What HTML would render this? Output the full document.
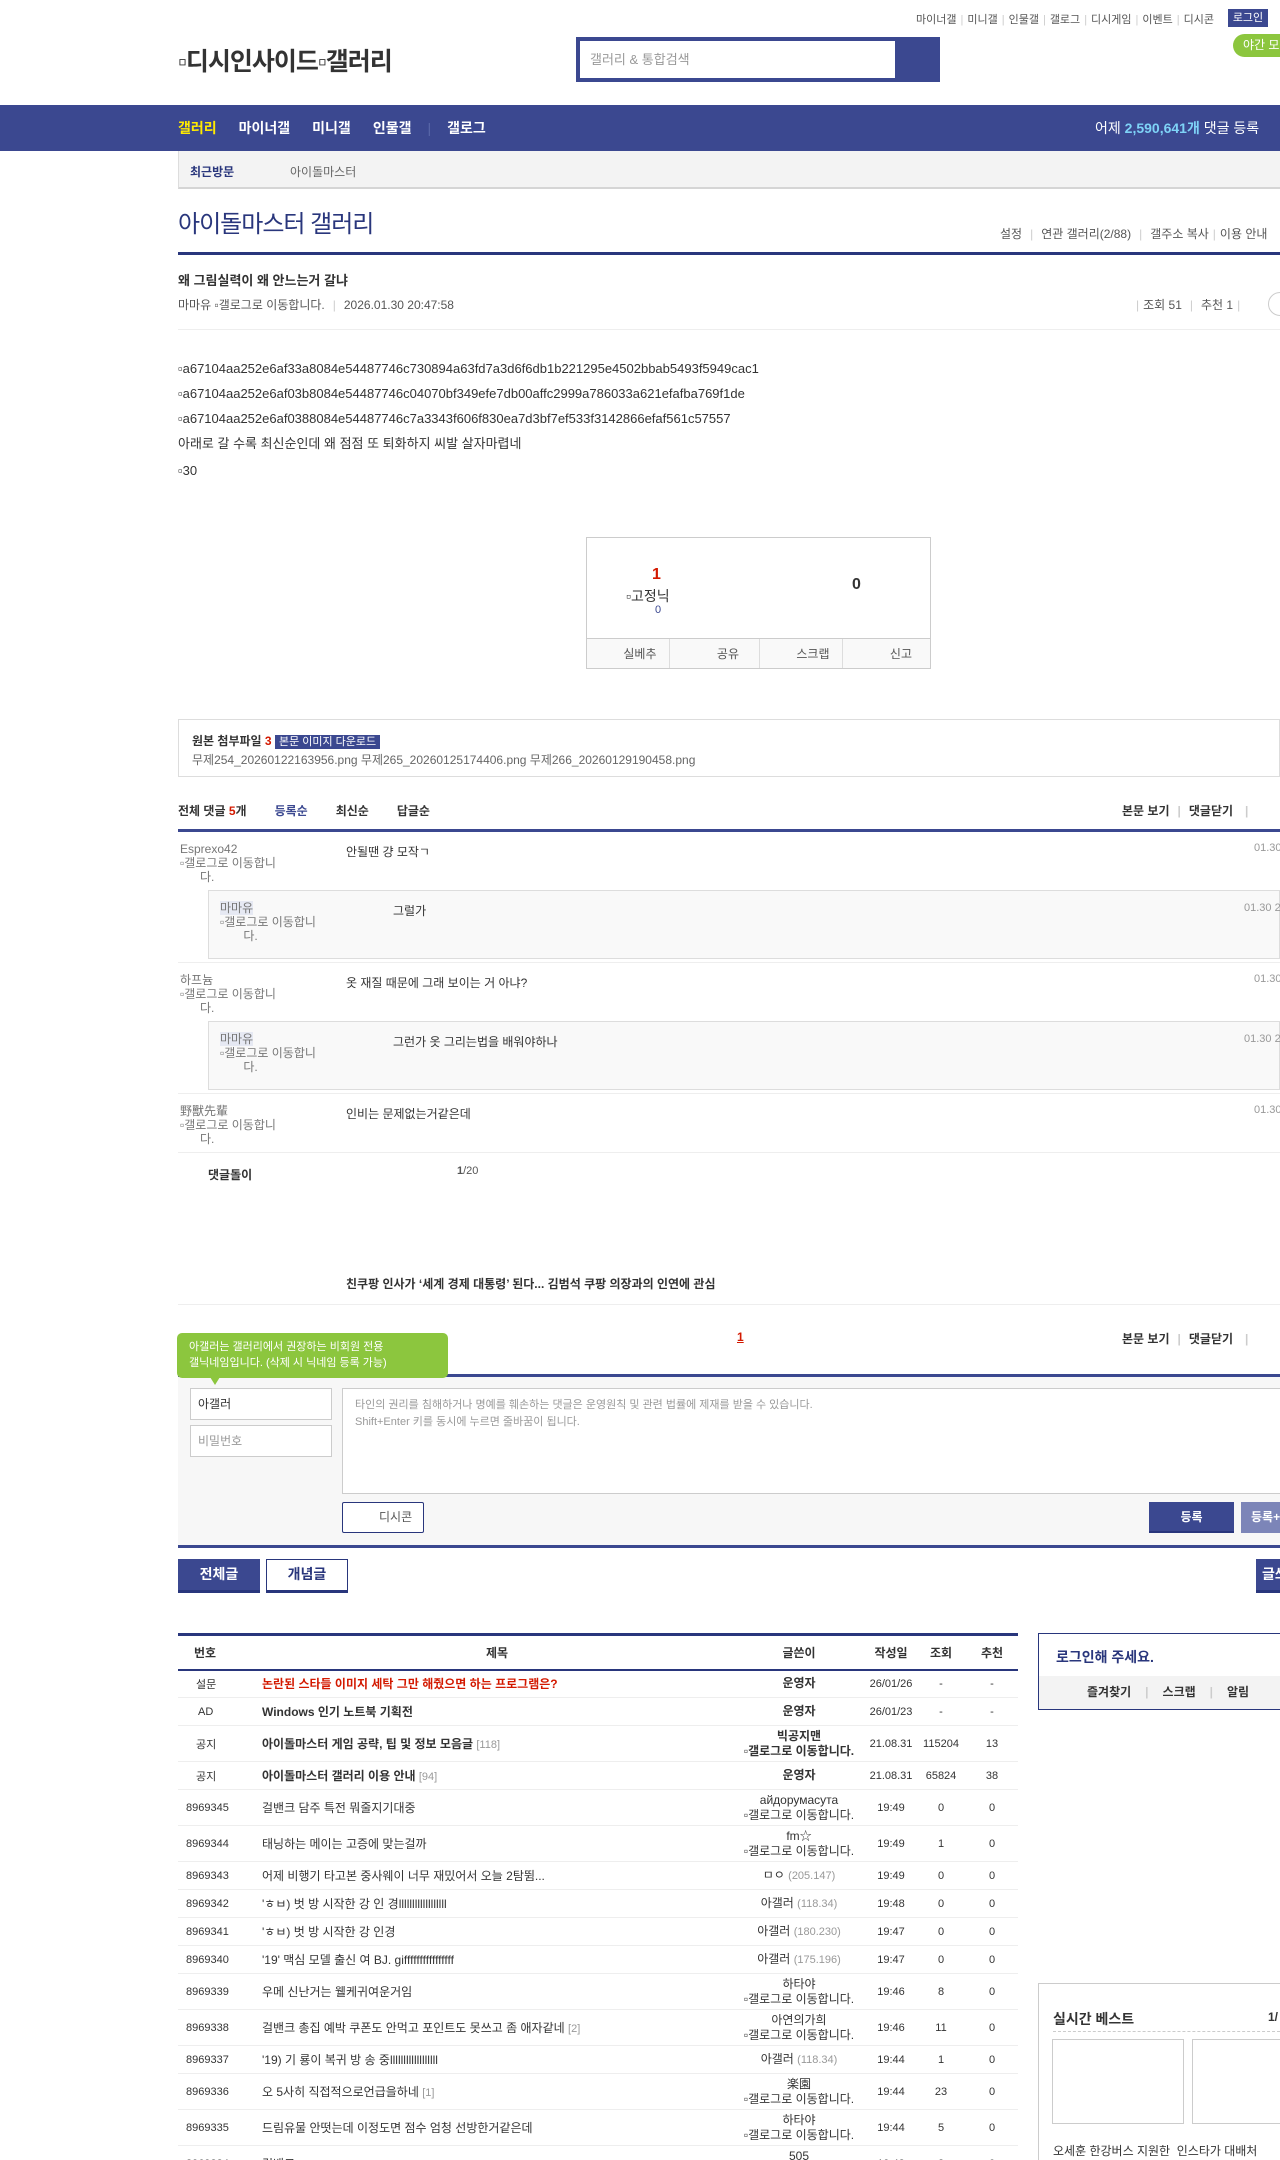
<!DOCTYPE html>
<html><head><meta charset="utf-8">
<style>
*{margin:0;padding:0;box-sizing:border-box}
html,body{width:1280px;height:2160px;overflow:hidden;background:#fff}
body{position:relative;font-family:"Liberation Sans","Noto Sans CJK KR",sans-serif;font-size:12px;color:#333}
.a{position:absolute;white-space:nowrap}
.sep{color:#ccc;margin:0 4px}
table{border-collapse:collapse}
.tb{position:absolute;left:178px;top:1633px;width:840px;border-top:3px solid #29367c;font-size:12px;table-layout:fixed}
.tb th{height:35px;font-weight:bold;font-size:12px;color:#333;border-bottom:2px solid #29367c}
.tb td{border-bottom:1px solid #eee;text-align:center;font-size:11px;color:#333;white-space:nowrap;overflow:hidden}
.tb td.t{text-align:left;font-size:12px;padding-left:0}
.tb td.w{font-size:12px;line-height:15px}
.tb .r28 td{height:28px}.tb .r36 td{height:36px}
.gr{color:#999;font-size:11px}
</style></head><body>

<div class="a" style="left:916px;top:11px;font-size:11px;color:#555">마이너갤<span class="sep">|</span>미니갤<span class="sep">|</span>인물갤<span class="sep">|</span>갤로그<span class="sep">|</span>디시게임<span class="sep">|</span>이벤트<span class="sep">|</span>디시콘</div>
<div class="a" style="left:1228px;top:9px;width:40px;height:18px;background:#3b4890;color:#fff;font-size:11px;text-align:center;line-height:18px">로그인</div>
<div class="a" style="left:1233px;top:34px;width:60px;height:23px;background:#8cc63e;color:#fff;border-radius:12px 0 0 12px;font-size:12px;line-height:23px;padding-left:10px">야간 모드</div>

<div class="a" style="left:178px;top:42px;font-size:25px;font-weight:bold;color:#333;letter-spacing:-1px">▫디시인사이드▫갤러리</div>

<div class="a" style="left:576px;top:37px;width:364px;height:45px;background:#3b4890"></div>
<div class="a" style="left:580px;top:41px;width:315px;height:37px;background:#fff;font-size:13px;color:#999;line-height:37px;padding-left:10px">갤러리 &amp; 통합검색</div>

<div class="a" style="left:0;top:105px;width:1280px;height:46px;background:#3b4890"></div>
<div class="a" style="left:178px;top:119px;font-size:14px;font-weight:bold;color:#fff;line-height:18px"><span style="color:#ffea00">갤러리</span><span style="margin-left:22px">마이너갤</span><span style="margin-left:22px">미니갤</span><span style="margin-left:22px">인물갤</span><span style="margin:0 16px;color:#5a67a8;font-weight:normal">|</span>갤로그</div>
<div class="a" style="left:1095px;top:119px;font-size:14px;color:#fff;line-height:18px">어제 <b style="color:#7ed3f7">2,590,641개</b> 댓글 등록</div>

<div class="a" style="left:178px;top:151px;width:1102px;height:38px;background:#f3f3f3;border-bottom:2px solid #d5d5d5;border-left:1px solid #ddd"></div>
<div class="a" style="left:190px;top:163px;font-size:12px;font-weight:bold;color:#29367c">최근방문</div>
<div class="a" style="left:290px;top:163px;font-size:12px;color:#666">아이돌마스터</div>

<div class="a" style="left:178px;top:204px;font-size:24px;color:#29367c;letter-spacing:-1px">아이돌마스터 갤러리</div>
<div class="a" style="left:1000px;top:225px;font-size:12px;color:#555">설정<span class="sep" style="margin:0 8px">|</span>연관 갤러리(2/88)<span class="sep" style="margin:0 8px">|</span>갤주소 복사<span class="sep">|</span>이용 안내</div>
<div class="a" style="left:178px;top:252px;width:1102px;height:3px;background:#29367c"></div>

<div class="a" style="left:178px;top:270px;font-size:13px;font-weight:bold;color:#333">왜 그림실력이 왜 안느는거 갈냐</div>
<div class="a" style="left:178px;top:296px;font-size:12px;color:#555">마마유 ▫갤로그로 이동합니다.<span class="sep" style="margin:0 8px">|</span>2026.01.30 20:47:58</div>
<div class="a" style="left:1132px;top:296px;font-size:12px;color:#555"><span class="sep">|</span>조회 51<span class="sep" style="margin:0 8px">|</span>추천 1<span class="sep">|</span></div>
<div class="a" style="left:1268px;top:292px;width:24px;height:24px;border:1px solid #ccc;border-radius:12px"></div>
<div class="a" style="left:178px;top:329px;width:1102px;height:1px;background:#eee"></div>

<div class="a" style="left:178px;top:356px;font-size:13px;color:#333;line-height:25px">▫a67104aa252e6af33a8084e54487746c730894a63fd7a3d6f6db1b221295e4502bbab5493f5949cac1<br>▫a67104aa252e6af03b8084e54487746c04070bf349efe7db00affc2999a786033a621efafba769f1de<br>▫a67104aa252e6af0388084e54487746c7a3343f606f830ea7d3bf7ef533f3142866efaf561c57557<br>아래로 갈 수록 최신순인데 왜 점점 또 퇴화하지 씨발 살자마렵네</div>
<div class="a" style="left:178px;top:463px;font-size:13px;color:#333">▫30</div>

<div class="a" style="left:586px;top:537px;width:345px;height:132px;border:1px solid #ccc"></div>
<div class="a" style="left:652px;top:566px;font-size:16px;color:#d31900;font-weight:bold">1</div>
<div class="a" style="left:626px;top:586px;font-size:14px;color:#333">▫고정닉</div>
<div class="a" style="left:655px;top:604px;font-size:11px;color:#3b4890">0</div>
<div class="a" style="left:852px;top:576px;font-size:16px;color:#333;font-weight:bold">0</div>
<div class="a" style="left:587px;top:638px;width:343px;height:30px;background:#f9f9f9;border-top:1px solid #ccc;display:flex;font-size:12px;color:#555">
<div style="flex:1;text-align:right;padding-right:12px;line-height:30px;border-right:1px solid #ddd">실베추</div>
<div style="flex:1;text-align:right;padding-right:20px;line-height:30px;border-right:1px solid #ddd">공유</div>
<div style="flex:1;text-align:right;padding-right:12px;line-height:30px;border-right:1px solid #ddd">스크랩</div>
<div style="flex:1;text-align:right;padding-right:18px;line-height:30px">신고</div></div>

<div class="a" style="left:178px;top:719px;width:1102px;height:58px;border:1px solid #ddd"></div>
<div class="a" style="left:192px;top:732px;font-size:12px;font-weight:bold;color:#333">원본 첨부파일 <span style="color:#d31900">3</span> <span style="background:#3b4890;color:#fff;font-weight:normal;font-size:11px;padding:1px 4px">본문 이미지 다운로드</span></div>
<div class="a" style="left:192px;top:751px;font-size:12px;color:#666">무제254_20260122163956.png 무제265_20260125174406.png 무제266_20260129190458.png</div>

<div class="a" style="left:178px;top:802px;font-size:12px;font-weight:bold;color:#333">전체 댓글 <span style="color:#d31900">5</span>개<span style="color:#3b4890;margin-left:28px">등록순</span><span style="margin-left:28px">최신순</span><span style="margin-left:28px">답글순</span></div>
<div class="a" style="left:1122px;top:802px;font-size:12px;font-weight:bold;color:#333">본문 보기<span class="sep" style="margin:0 8px">|</span>댓글닫기<span class="sep" style="margin-left:12px">|</span></div>
<div class="a" style="left:178px;top:829px;width:1102px;height:3px;background:#3b4890"></div>

<div class="a" style="left:180px;top:842px;font-size:12px;color:#777;line-height:14px">Esprexo42<br>▫갤로그로 이동합니<br>&nbsp;&nbsp;&nbsp;&nbsp;&nbsp;&nbsp;다.</div>
<div class="a" style="left:346px;top:843px;font-size:12px;color:#333">안될땐 걍 모작ㄱ</div>
<div class="a" style="left:1254px;top:842px;font-size:11px;color:#999">01.30 20:50:12</div>
<div class="a" style="left:208px;top:890px;width:1072px;height:69px;background:#f9f9f9;border:1px solid #ddd"></div>
<div class="a" style="left:220px;top:901px;font-size:12px;color:#777;line-height:14px"><span style="background:#e6e9f3">마마유</span><br>▫갤로그로 이동합니<br>&nbsp;&nbsp;&nbsp;&nbsp;&nbsp;&nbsp;&nbsp;다.</div>
<div class="a" style="left:393px;top:902px;font-size:12px;color:#333">그럴가</div>
<div class="a" style="left:1244px;top:902px;font-size:11px;color:#999">01.30 20:51:33</div>
<div class="a" style="left:178px;top:962px;width:1102px;height:1px;background:#eee"></div>

<div class="a" style="left:180px;top:973px;font-size:12px;color:#777;line-height:14px">하프늄<br>▫갤로그로 이동합니<br>&nbsp;&nbsp;&nbsp;&nbsp;&nbsp;&nbsp;다.</div>
<div class="a" style="left:346px;top:974px;font-size:12px;color:#333">옷 재질 때문에 그래 보이는 거 아냐?</div>
<div class="a" style="left:1254px;top:973px;font-size:11px;color:#999">01.30 20:52:10</div>
<div class="a" style="left:208px;top:1021px;width:1072px;height:69px;background:#f9f9f9;border:1px solid #ddd"></div>
<div class="a" style="left:220px;top:1032px;font-size:12px;color:#777;line-height:14px"><span style="background:#e6e9f3">마마유</span><br>▫갤로그로 이동합니<br>&nbsp;&nbsp;&nbsp;&nbsp;&nbsp;&nbsp;&nbsp;다.</div>
<div class="a" style="left:393px;top:1033px;font-size:12px;color:#333">그런가 옷 그리는법을 배워야하나</div>
<div class="a" style="left:1244px;top:1033px;font-size:11px;color:#999">01.30 20:53:02</div>
<div class="a" style="left:178px;top:1093px;width:1102px;height:1px;background:#eee"></div>

<div class="a" style="left:180px;top:1104px;font-size:12px;color:#777;line-height:14px">野獸先輩<br>▫갤로그로 이동합니<br>&nbsp;&nbsp;&nbsp;&nbsp;&nbsp;&nbsp;다.</div>
<div class="a" style="left:346px;top:1105px;font-size:12px;color:#333">인비는 문제없는거같은데</div>
<div class="a" style="left:1254px;top:1104px;font-size:11px;color:#999">01.30 20:55:40</div>
<div class="a" style="left:178px;top:1152px;width:1102px;height:1px;background:#eee"></div>
<div class="a" style="left:208px;top:1166px;font-size:12px;font-weight:bold;color:#333">댓글돌이</div>
<div class="a" style="left:457px;top:1165px;font-size:11px;color:#555"><b>1</b>/20</div>

<div class="a" style="left:346px;top:1275px;font-size:12px;font-weight:bold;color:#333">친쿠팡 인사가 ‘세계 경제 대통령’ 된다... 김범석 쿠팡 의장과의 인연에 관심</div>
<div class="a" style="left:178px;top:1304px;width:1102px;height:1px;background:#eee"></div>

<div class="a" style="left:737px;top:1330px;font-size:12px;font-weight:bold;color:#d31900;text-decoration:underline">1</div>
<div class="a" style="left:1122px;top:1330px;font-size:12px;font-weight:bold;color:#333">본문 보기<span class="sep" style="margin:0 8px">|</span>댓글닫기<span class="sep" style="margin-left:12px">|</span></div>
<div class="a" style="left:178px;top:1374px;width:1102px;height:3px;background:#3b4890"></div>
<div class="a" style="left:178px;top:1377px;width:1102px;height:168px;background:#f7f7f7"></div>
<div class="a" style="left:178px;top:1545px;width:1102px;height:3px;background:#3b4890"></div>
<div class="a" style="left:177px;top:1333px;width:271px;height:45px;background:#8cc63e;border-radius:5px;color:#fff;font-size:11px;line-height:16px;padding:6px 12px">아갤러는 갤러리에서 권장하는 비회원 전용<br>갤닉네임입니다. (삭제 시 닉네임 등록 가능)</div>
<div class="a" style="left:210px;top:1377px;width:0;height:0;border-left:5px solid transparent;border-right:5px solid transparent;border-top:8px solid #8cc63e"></div>
<div class="a" style="left:190px;top:1388px;width:142px;height:32px;background:#fff;border:1px solid #ccc;font-size:12px;color:#333;line-height:30px;padding-left:7px">아갤러</div>
<div class="a" style="left:190px;top:1425px;width:142px;height:32px;background:#fff;border:1px solid #ccc;font-size:12px;color:#999;line-height:30px;padding-left:7px">비밀번호</div>
<div class="a" style="left:342px;top:1388px;width:940px;height:106px;background:#fff;border:1px solid #ccc;font-size:11px;color:#999;line-height:17px;padding:8px 12px">타인의 권리를 침해하거나 명예를 훼손하는 댓글은 운영원칙 및 관련 법률에 제재를 받을 수 있습니다.<br>Shift+Enter 키를 동시에 누르면 줄바꿈이 됩니다.</div>
<div class="a" style="left:342px;top:1502px;width:82px;height:31px;background:#fff;border:1px solid #29367c;border-radius:2px;font-size:12px;color:#555;line-height:29px;padding-left:36px">디시콘</div>
<div class="a" style="left:1149px;top:1502px;width:85px;height:31px;background:#3b4890;color:#fff;font-size:12px;font-weight:bold;text-align:center;line-height:31px;border-bottom:2px solid #29367c">등록</div>
<div class="a" style="left:1241px;top:1502px;width:50px;height:31px;background:#7c85b8;color:#fff;font-size:12px;font-weight:bold;line-height:31px;padding-left:10px">등록+추천</div>

<div class="a" style="left:178px;top:1559px;width:82px;height:34px;background:#3b4890;border-bottom:3px solid #29367c;color:#fff;font-size:14px;font-weight:bold;text-align:center;line-height:31px">전체글</div>
<div class="a" style="left:266px;top:1559px;width:82px;height:34px;background:#fff;border:1px solid #29367c;border-bottom:3px solid #29367c;color:#29367c;font-size:14px;font-weight:bold;text-align:center;line-height:29px">개념글</div>
<div class="a" style="left:1256px;top:1559px;width:60px;height:34px;background:#3b4890;border-bottom:3px solid #29367c;color:#fff;font-size:14px;font-weight:bold;line-height:31px;padding-left:6px">글쓰기</div>

<table class="tb">
<colgroup><col style="width:84px"><col style="width:470px"><col style="width:134px"><col style="width:50px"><col style="width:50px"><col style="width:52px"></colgroup>
<tr><th style="text-align:left;padding-left:16px">번호</th><th>제목</th><th>글쓴이</th><th>작성일</th><th>조회</th><th>추천</th></tr>
<tr class="r28"><td class="gr" style="text-align:left;padding-left:18px">설문</td><td class="t" style="color:#d31900;font-weight:bold">논란된 스타들 이미지 세탁 그만 해줬으면 하는 프로그램은?</td><td class="w"><b>운영자</b></td><td>26/01/26</td><td>-</td><td>-</td></tr>
<tr class="r28"><td style="text-align:left;padding-left:20px">AD</td><td class="t" style="font-weight:bold">Windows 인기 노트북 기획전</td><td class="w"><b>운영자</b></td><td>26/01/23</td><td>-</td><td>-</td></tr>
<tr class="r36"><td class="gr" style="text-align:left;padding-left:18px">공지</td><td class="t" style="font-weight:bold">아이돌마스터 게임 공략, 팁 및 정보 모음글 <span class="gr" style="font-weight:normal">[118]</span></td><td class="w"><b>빅공지맨<br>▫갤로그로 이동합니다.</b></td><td>21.08.31</td><td>115204</td><td>13</td></tr>
<tr class="r28"><td class="gr" style="text-align:left;padding-left:18px">공지</td><td class="t" style="font-weight:bold">아이돌마스터 갤러리 이용 안내 <span class="gr" style="font-weight:normal">[94]</span></td><td class="w"><b>운영자</b></td><td>21.08.31</td><td>65824</td><td>38</td></tr>
<tr class="r36"><td style="text-align:left;padding-left:8px">8969345</td><td class="t">걸밴크 담주 특전 뭐줄지기대중</td><td class="w">айдорумасута<br>▫갤로그로 이동합니다.</td><td>19:49</td><td>0</td><td>0</td></tr>
<tr class="r36"><td style="text-align:left;padding-left:8px">8969344</td><td class="t">태닝하는 메이는 고증에 맞는걸까</td><td class="w">fm☆<br>▫갤로그로 이동합니다.</td><td>19:49</td><td>1</td><td>0</td></tr>
<tr class="r28"><td style="text-align:left;padding-left:8px">8969343</td><td class="t">어제 비행기 타고본 중사웨이 너무 재밌어서 오늘 2탐뜀...</td><td class="w">ㅁㅇ <span class="gr">(205.147)</span></td><td>19:49</td><td>0</td><td>0</td></tr>
<tr class="r28"><td style="text-align:left;padding-left:8px">8969342</td><td class="t">'ㅎㅂ) 벗 방 시작한 강 인 경llllllllllllllllll</td><td class="w">아갤러 <span class="gr">(118.34)</span></td><td>19:48</td><td>0</td><td>0</td></tr>
<tr class="r28"><td style="text-align:left;padding-left:8px">8969341</td><td class="t">'ㅎㅂ) 벗 방 시작한 강 인경</td><td class="w">아갤러 <span class="gr">(180.230)</span></td><td>19:47</td><td>0</td><td>0</td></tr>
<tr class="r28"><td style="text-align:left;padding-left:8px">8969340</td><td class="t">'19' 맥심 모델 출신 여 BJ. giffffffffffffffff</td><td class="w">아갤러 <span class="gr">(175.196)</span></td><td>19:47</td><td>0</td><td>0</td></tr>
<tr class="r36"><td style="text-align:left;padding-left:8px">8969339</td><td class="t">우메 신난거는 웰케귀여운거임</td><td class="w">하타야<br>▫갤로그로 이동합니다.</td><td>19:46</td><td>8</td><td>0</td></tr>
<tr class="r36"><td style="text-align:left;padding-left:8px">8969338</td><td class="t">걸밴크 총집 예박 쿠폰도 안먹고 포인트도 못쓰고 좀 애자같네 <span class="gr">[2]</span></td><td class="w">아연의가희<br>▫갤로그로 이동합니다.</td><td>19:46</td><td>11</td><td>0</td></tr>
<tr class="r28"><td style="text-align:left;padding-left:8px">8969337</td><td class="t">'19) 기 룡이 복귀 방 송 중llllllllllllllllll</td><td class="w">아갤러 <span class="gr">(118.34)</span></td><td>19:44</td><td>1</td><td>0</td></tr>
<tr class="r36"><td style="text-align:left;padding-left:8px">8969336</td><td class="t">오 5사히 직접적으로언급을하네 <span class="gr">[1]</span></td><td class="w">楽園<br>▫갤로그로 이동합니다.</td><td>19:44</td><td>23</td><td>0</td></tr>
<tr class="r36"><td style="text-align:left;padding-left:8px">8969335</td><td class="t">드림유물 안떳는데 이정도면 점수 엄청 선방한거같은데</td><td class="w">하타야<br>▫갤로그로 이동합니다.</td><td>19:44</td><td>5</td><td>0</td></tr>
<tr class="r36"><td style="text-align:left;padding-left:8px">8969334</td><td class="t">걸밴크 ㅇㅇ</td><td class="w">505<br>▫갤로그로 이동합니다.</td><td>19:43</td><td>3</td><td>0</td></tr>
</table>

<div class="a" style="left:1038px;top:1633px;width:260px;height:77px;border:1px solid #29367c;border-right:none"></div>
<div class="a" style="left:1056px;top:1647px;font-size:14px;font-weight:bold;color:#29367c">로그인해 주세요.</div>
<div class="a" style="left:1039px;top:1676px;width:241px;height:33px;background:#f3f3f3;font-size:12px;font-weight:bold;color:#333;line-height:33px;padding-left:48px">즐겨찾기<span class="sep" style="margin:0 14px">|</span>스크랩<span class="sep" style="margin:0 14px">|</span>알림</div>

<div class="a" style="left:1038px;top:1983px;width:260px;height:200px;border:1px solid #ccc;border-right:none"></div>
<div class="a" style="left:1053px;top:2009px;font-size:14px;font-weight:bold;color:#333">실시간 베스트</div>
<div class="a" style="left:1268px;top:2010px;font-size:12px;font-weight:bold;color:#333">1/</div>
<div class="a" style="left:1053px;top:2031px;width:227px;border-top:1px dashed #ccc"></div>
<div class="a" style="left:1052px;top:2039px;width:132px;height:85px;border:1px solid #ccc"></div>
<div class="a" style="left:1192px;top:2039px;width:132px;height:85px;border:1px solid #ccc"></div>
<div class="a" style="left:1053px;top:2142px;font-size:12px;color:#333">오세훈 한강버스 지원한 &nbsp;인스타가 대배처</div>

</body></html>
